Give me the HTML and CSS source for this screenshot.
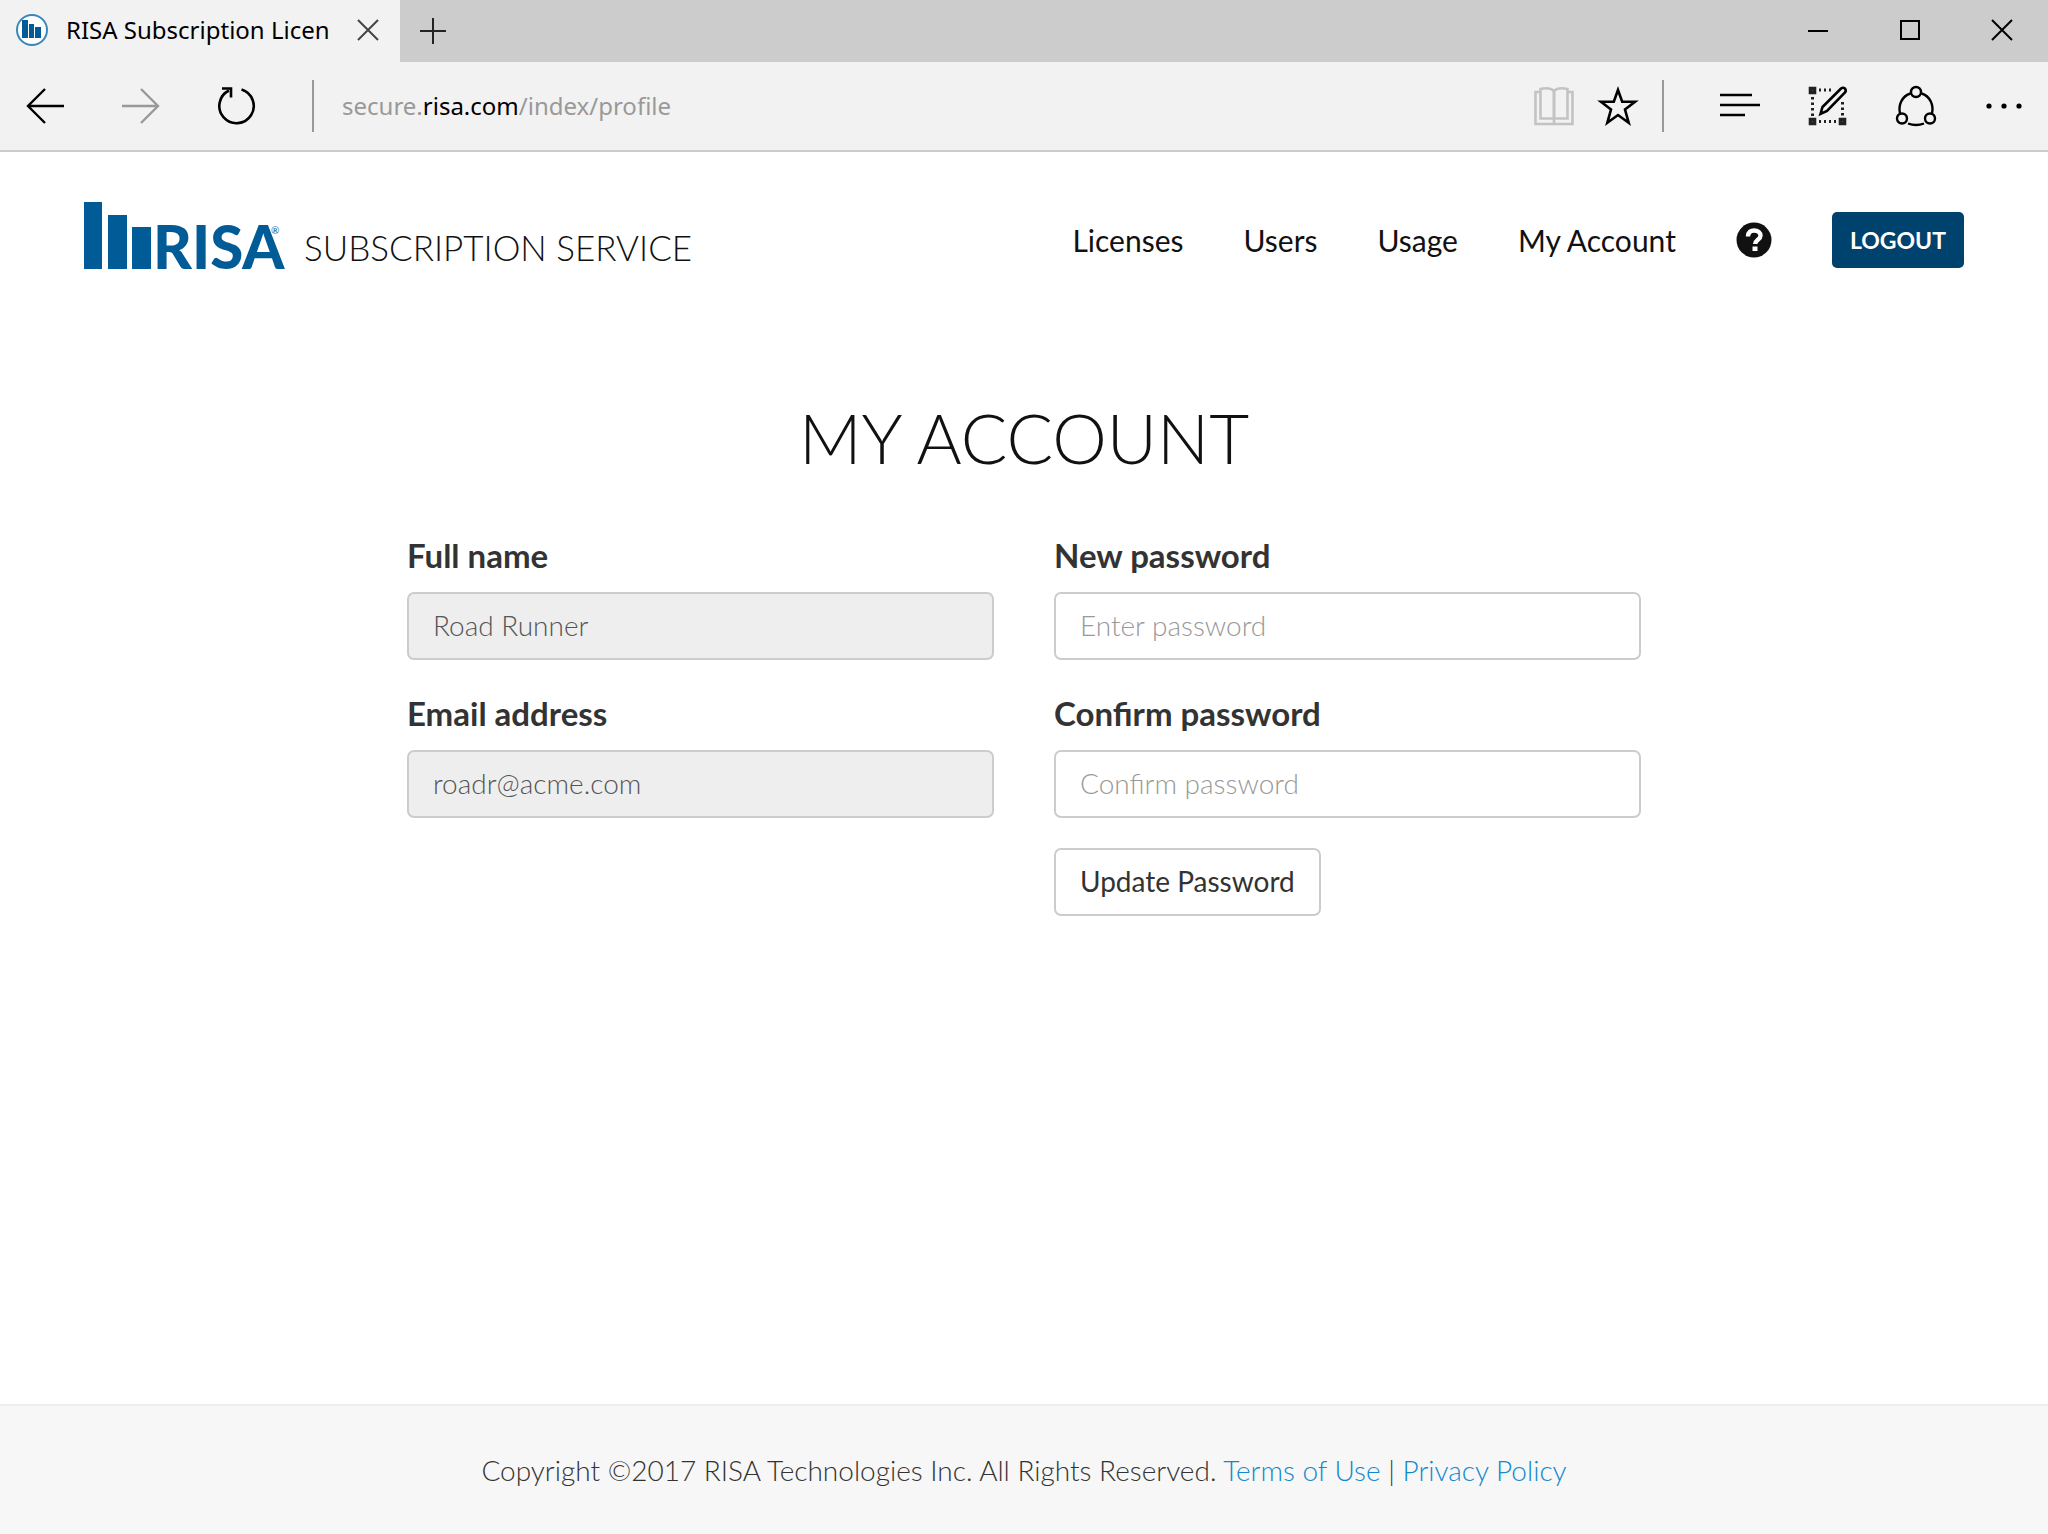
FILE: index.html
```html
<!DOCTYPE html>
<html lang="en">
<head>
<meta charset="utf-8">
<title>RISA Subscription License</title>
<meta name="viewport" content="width=device-width, initial-scale=1">
<link rel="stylesheet" href="styles.css">
</head>
<body>
<div class="browser">
  <div class="tabbar">
    <div class="tab">
      <svg class="favicon" width="32" height="32" viewBox="0 0 32 32" aria-hidden="true">
        <circle cx="16" cy="16" r="15" fill="#fff" stroke="#3a86bb" stroke-width="2"/>
        <path fill="#005b96" d="M6 6h6v18H6zM13 10h5v14h-5zM19 13h6v11h-6z"/>
      </svg>
      <span class="tab-title">RISA Subscription Licen</span>
      <button class="icon-button" type="button" aria-label="Close tab">
        <svg width="20" height="20" viewBox="0 0 20 20"><path d="M0 0l20 20M20 0L0 20" stroke="#444" stroke-width="2"/></svg>
      </button>
    </div>
    <button class="icon-button new-tab" type="button" aria-label="New tab">
      <svg width="26" height="26" viewBox="0 0 26 26"><path d="M0 13h26M13 0v26" stroke="#222" stroke-width="2"/></svg>
    </button>
    <div class="window-controls">
      <button class="icon-button" type="button" aria-label="Minimize">
        <svg width="20" height="20" viewBox="0 0 20 20"><path d="M0 11h20" stroke="#000" stroke-width="2"/></svg>
      </button>
      <button class="icon-button" type="button" aria-label="Maximize">
        <svg width="20" height="20" viewBox="0 0 20 20"><path d="M1 1h18v18H1z" fill="none" stroke="#000" stroke-width="2"/></svg>
      </button>
      <button class="icon-button" type="button" aria-label="Close window">
        <svg width="20" height="20" viewBox="0 0 20 20"><path d="M0 0l20 20M20 0L0 20" stroke="#000" stroke-width="2"/></svg>
      </button>
    </div>
  </div>
  <div class="toolbar">
    <div class="history">
      <button class="icon-button" type="button" aria-label="Back">
        <svg width="38" height="38" viewBox="0 0 38 38"><path d="M38 19H2M19 2L2 19l17 17" fill="none" stroke="#000" stroke-width="2.4"/></svg>
      </button>
      <button class="icon-button" type="button" aria-label="Forward">
        <svg width="38" height="38" viewBox="0 0 38 38"><path d="M0 19h36M19 2l17 17-17 17" fill="none" stroke="#999" stroke-width="2.4"/></svg>
      </button>
      <button class="icon-button" type="button" aria-label="Refresh">
        <svg width="38" height="38" viewBox="0 0 38 38"><path d="M23.500 2.500A17.200 17.200 0 1 1 11 3.500" fill="none" stroke="#000" stroke-width="2.600"/><path d="M4 1.500h9v9" fill="none" stroke="#000" stroke-width="2.600"/></svg>
      </button>
    </div>
    <div class="divider"></div>
    <div class="address">secure.<span class="domain">risa.com</span>/index/profile</div>
    <div class="page-tools">
      <button class="icon-button" type="button" aria-label="Reading view">
        <svg width="40" height="40" viewBox="0 0 40 40" fill="none" stroke="#c3c3c3" stroke-width="2.600"><path d="M6 6H1.500v32h37V6H34"/><path d="M20 5C17 2 11 2 6.500 3v29.500H20zM20 5c3-3 9-3 13.500-2v29.500H20z"/><path d="M20 5v33"/></svg>
      </button>
      <button class="icon-button" type="button" aria-label="Add to favorites">
        <svg width="40" height="40" viewBox="0 0 40 40"><path d="M20 4l4.200 11.800H37L27 23.500l3.700 13.300L20 29 9.300 36.800 13 23.500 3 15.800h12.800z" fill="none" stroke="#000" stroke-width="2.600"/></svg>
      </button>
    </div>
    <div class="divider"></div>
    <div class="browser-tools">
      <button class="icon-button" type="button" aria-label="Hub">
        <svg width="40" height="40" viewBox="0 0 40 40"><path d="M0 9h32M0 19h40M0 29h25" stroke="#000" stroke-width="2.400"/></svg>
      </button>
      <button class="icon-button" type="button" aria-label="Make a web note">
        <svg width="40" height="40" viewBox="0 0 40 40" fill="none" stroke="#222"><path d="M2.500 2.500h4v4h-4zM2.500 33.500h4v4h-4zM32.500 33.500h4v4h-4z" stroke-width="3.600"/><path d="M11 4h12M11 35.500h19" stroke-width="3" stroke-dasharray="2 3"/><path d="M4.500 11v19M34.500 16v15" stroke-width="3" stroke-dasharray="2.500 3"/><path d="M12.500 28l2-7L33 2.500q2-1.500 4 0 1.500 2 0 4L19 25z" stroke="#000" stroke-width="2.600"/></svg>
      </button>
      <button class="icon-button" type="button" aria-label="Share">
        <svg width="40" height="40" viewBox="0 0 40 40" fill="none" stroke="#000" stroke-width="2.400"><path d="M14.500 7.500C6 10 2 19 4 27.500M25.500 7.500C34 10 38 19 36 27.500M12 37.500q8 3 16 0"/><circle cx="20" cy="6" r="5"/><circle cx="6" cy="32.500" r="5"/><circle cx="34" cy="32.500" r="5"/></svg>
      </button>
      <button class="icon-button" type="button" aria-label="More">
        <svg width="40" height="40" viewBox="0 0 40 40"><circle cx="5" cy="20" r="2.600"/><circle cx="20" cy="20" r="2.600"/><circle cx="35" cy="20" r="2.600"/></svg>
      </button>
    </div>
  </div>
</div>

<header class="site-header">
  <a class="brand" href="#">
    <svg class="logo" width="200" height="68" viewBox="0 0 200 68" role="img" aria-label="RISA">
      <path fill="#005b96" d="M0 0h18v67H0zM24 13h19v54H24zM48 25h19v42H48z"/>
      <text class="logo-name" x="69" y="67">RISA<tspan class="logo-mark" x="187" y="32">®</tspan></text>
    </svg>
    <span class="service">SUBSCRIPTION SERVICE</span>
  </a>
  <nav class="site-nav">
    <a href="#">Licenses</a>
    <a href="#">Users</a>
    <a href="#">Usage</a>
    <a href="#">My Account</a>
    <a class="help" href="#" aria-label="Help">
      <svg width="36" height="36" viewBox="0 0 36 36"><circle cx="18" cy="18" r="17.500" fill="#111"/><path d="M12 14.500C12 10 15 8.500 18 8.500c4 0 6.500 2.300 6.500 5.200 0 4-5.300 4.200-5.300 8.300" fill="none" stroke="#fff" stroke-width="4.400"/><path fill="#fff" d="M16.500 24.500h5v4.500h-5z"/></svg>
    </a>
    <button class="logout" type="button">LOGOUT</button>
  </nav>
</header>

<main class="account">
  <h1>MY ACCOUNT</h1>
  <form class="account-form">
    <div class="column">
      <div class="field">
        <label for="full-name">Full name</label>
        <input id="full-name" type="text" value="Road Runner" disabled>
      </div>
      <div class="field">
        <label for="email">Email address</label>
        <input id="email" type="email" value="roadr@acme.com" disabled>
      </div>
    </div>
    <div class="column">
      <div class="field">
        <label for="new-password">New password</label>
        <input id="new-password" type="password" placeholder="Enter password">
      </div>
      <div class="field">
        <label for="confirm-password">Confirm password</label>
        <input id="confirm-password" type="password" placeholder="Confirm password">
      </div>
      <button class="update" type="button">Update Password</button>
    </div>
  </form>
</main>

<footer class="site-footer">
  <p>Copyright ©2017 RISA Technologies Inc. All Rights Reserved. <a href="#">Terms of Use</a> | <a href="#">Privacy Policy</a></p>
</footer>
</body>
</html>
```
FILE: styles.css
```css
* {
  box-sizing: border-box;
}

body {
  display: flex;
  flex-direction: column;
  min-height: 100vh;
  margin: 0;
  background: #fff;
  color: #333;
  font-family: Lato, sans-serif;
  font-size: 28px;
  line-height: 36px;
}

button,
input {
  font: inherit;
}

a {
  color: inherit;
  text-decoration: none;
}

svg {
  display: block;
  overflow: visible;
}

/* Browser chrome */
.browser {
  background: #f2f2f2;
  border-bottom: 2px solid #ccc;
  color: #000;
  font-family: "Noto Sans", sans-serif;
  font-size: 24px;
}

.icon-button {
  display: flex;
  align-items: center;
  justify-content: center;
  padding: 0;
  border: 0;
  background: none;
}

.tabbar {
  display: flex;
  height: 62px;
  background: #ccc;
}

.tab {
  display: flex;
  align-items: center;
  width: 400px;
  padding: 0 22px 2px 16px;
  background: #f2f2f2;
}

.tab-title {
  flex: 1;
  margin-left: 18px;
  white-space: nowrap;
}

.new-tab {
  margin-left: 20px;
}

.window-controls {
  display: flex;
  margin-left: auto;
  padding-bottom: 2px;
}

.window-controls .icon-button {
  width: 92px;
}

.toolbar {
  display: flex;
  align-items: center;
  height: 88px;
}

.history {
  display: flex;
  gap: 58px;
  padding: 0 56px 0 26px;
}

.divider {
  width: 2px;
  height: 52px;
  background: #999;
}

.address {
  flex: 1;
  padding-left: 28px;
  color: #999;
}

.domain {
  color: #000;
}

.page-tools {
  display: flex;
  gap: 24px;
  padding-right: 24px;
}

.browser-tools {
  display: flex;
  padding-left: 32px;
}

.browser-tools .icon-button {
  width: 88px;
}

/* Site header */
.site-header {
  display: flex;
  align-items: flex-end;
  justify-content: space-between;
  padding: 50px 84px 0;
  color: #111;
}

.brand {
  display: flex;
  align-items: flex-end;
  gap: 20px;
}

.logo-name {
  fill: #005b96;
  font-size: 60px;
  font-weight: 900;
}

.logo-mark {
  font-size: 10px;
  font-weight: 400;
}

.service {
  font-size: 35px;
  font-weight: 300;
  line-height: 46px;
}

.site-nav {
  display: flex;
  align-items: center;
  gap: 60px;
  padding-bottom: 2px;
  font-size: 30px;
}

.logout {
  height: 56px;
  padding: 0 18px;
  border: 0;
  border-radius: 5px;
  background: #00426e;
  color: #fff;
  font-size: 23px;
  font-weight: 700;
}

/* Account form */
.account {
  flex: 1;
  width: 100%;
  max-width: 1282px;
  margin: 0 auto;
  padding: 128px 24px 60px;
}

h1 {
  margin: 0 0 54px;
  font-size: 69px;
  font-weight: 300;
  line-height: 80px;
  text-align: center;
  color: #111;
}

.account-form {
  display: grid;
  grid-template-columns: 1fr 1fr;
  gap: 60px;
}

.column {
  display: flex;
  flex-direction: column;
  align-items: flex-start;
  gap: 30px;
}

.field {
  display: flex;
  flex-direction: column;
  gap: 14px;
  width: 100%;
}

label {
  font-size: 33px;
  font-weight: 700;
  line-height: 46px;
}

input,
.update {
  height: 68px;
  padding: 0 24px 2px;
  border: 2px solid #ccc;
  border-radius: 7px;
  background: #fff;
}

input {
  width: 100%;
  color: #555;
  font-weight: 300;
}

input:disabled {
  background: #eee;
}

input::placeholder {
  color: #999;
}

.update {
  color: #333;
}

/* Footer */
.site-footer {
  padding: 46px 24px;
  border-top: 2px solid #eee;
  background: #f7f7f7;
  font-weight: 300;
  text-align: center;
}

.site-footer p {
  margin: 0;
}

.site-footer a {
  color: #1289cc;
}
```
